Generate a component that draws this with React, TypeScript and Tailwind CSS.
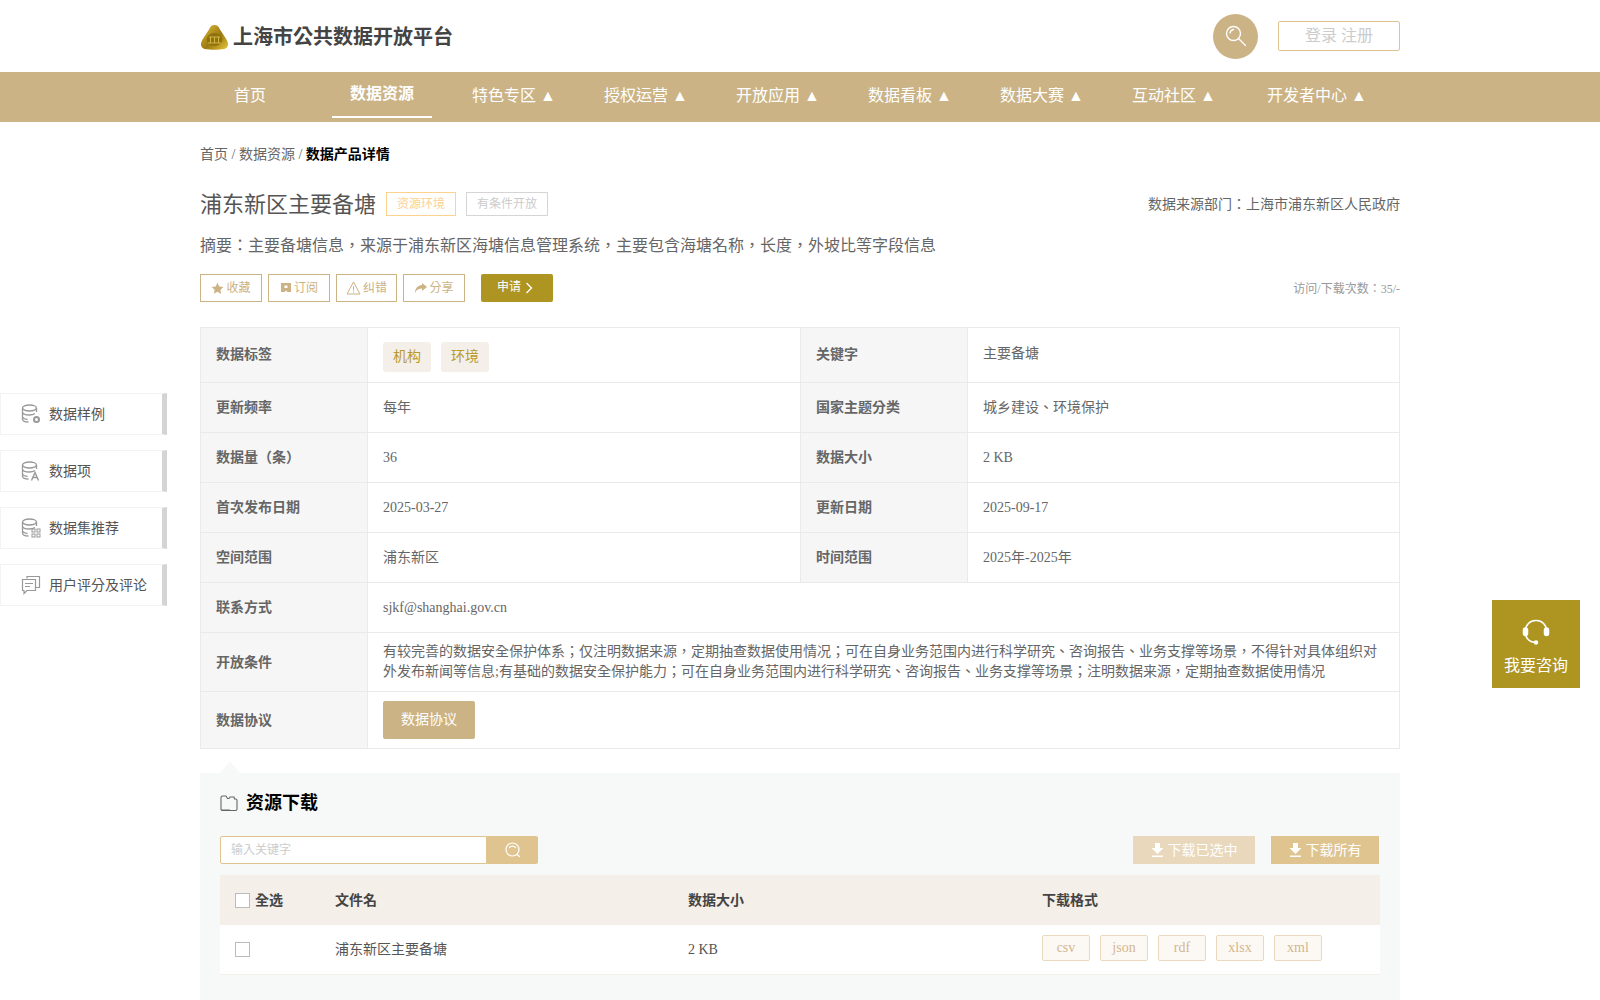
import type { ReactNode } from "react";

const navItems = ["首页", "数据资源", "特色专区 ▲", "授权运营 ▲", "开放应用 ▲", "数据看板 ▲", "数据大赛 ▲", "互动社区 ▲", "开发者中心 ▲"];

function Logo() {
  return (
    <svg width="29" height="26" viewBox="0 0 29 26">
      <defs>
        <linearGradient id="gold" x1="0" y1="0" x2="1" y2="1">
          <stop offset="0" stopColor="#e2bf3a" />
          <stop offset="0.55" stopColor="#9c7a12" />
          <stop offset="1" stopColor="#e6c83a" />
        </linearGradient>
      </defs>
      <path d="M14.500 1c3 0 4.500 2 5.500 4.500l6.500 10c2.500 4.500 2 8-2 9.500-6 1-14 1-20 0-4-1.500-4.500-5-2-9.500L9 5.500C10 3 11.500 1 14.500 1z" fill="url(#gold)" />
      <ellipse cx="14.500" cy="15.500" rx="8" ry="6.500" fill="#8f7110" />
      <path d="M8 19h13M9 13h11M10.500 13v6M14.500 13v6M18.500 13v6" stroke="#d9bd48" strokeWidth="0.9" fill="none" />
    </svg>
  );
}

function SearchGlyph() {
  return (
    <svg width="22" height="22" viewBox="0 0 22 22" fill="none" stroke="#fff" strokeWidth="1.400">
      <circle cx="8.500" cy="8.500" r="7" />
      <path d="M5 8a4 4 0 0 1 3.500-3.500M14 14l6.500 6.500" strokeLinecap="round" />
    </svg>
  );
}

function SmallSearchGlyph() {
  return (
    <svg width="16" height="16" viewBox="0 0 16 16" fill="none" stroke="#fff" strokeWidth="1.200">
      <circle cx="7.500" cy="7.500" r="6.500" />
      <path d="M4.500 5.500a4 4 0 0 1 6 0M12 12.500l2.500 2" strokeLinecap="round" />
    </svg>
  );
}

function DbIcon({ mark }: { mark: ReactNode }) {
  return (
    <svg width="20" height="20" viewBox="0 0 20 20" fill="none" stroke="#999" strokeWidth="1.300">
      <ellipse cx="8.500" cy="4" rx="7" ry="3" />
      <path d="M1.500 4v11c0 2 3 3 6 3M15.500 4v4M1.500 8c0 2 3 3 7 3 2 0 4-.5 5.500-1.500M1.500 12.500c0 1.500 2 2.500 5 3" />
      {mark}
    </svg>
  );
}

const sideItems = [
  {
    label: "数据样例",
    icon: <DbIcon mark={<circle cx="15.500" cy="15.500" r="2.500" strokeWidth="2" />} />,
  },
  {
    label: "数据项",
    icon: <DbIcon mark={<path d="M10.500 19.500l3.500-8 3.500 8M12 16.500h4" strokeWidth="1.400" />} />,
  },
  {
    label: "数据集推荐",
    icon: (
      <DbIcon
        mark={
          <g strokeWidth="1">
            <rect x="11" y="11" width="3" height="3" />
            <rect x="16" y="11" width="3" height="3" />
            <rect x="11" y="16" width="3" height="3" />
            <rect x="16" y="16" width="3" height="3" />
          </g>
        }
      />
    ),
  },
  {
    label: "用户评分及评论",
    icon: (
      <svg width="20" height="20" viewBox="0 0 20 20" fill="none" stroke="#999" strokeWidth="1.200">
        <path d="M6 3.500V1.500h12.500v11H15" />
        <path d="M1.500 4.500h13v11H6l-3 3v-3H1.500z" />
        <path d="M4 8.500h8M4 11.500h5" />
      </svg>
    ),
  },
];

function ActionBtn({ icon, label, width }: { icon: ReactNode; label: string; width: string }) {
  return (
    <button className={`${width} h-[28px] border border-[#cbb385] flex items-center justify-center gap-[2px] text-[12px] text-[#cbb385]`}>
      {icon}
      {label}
    </button>
  );
}

function Label({ children, lift }: { children: ReactNode; lift?: boolean }) {
  return <td className={`bg-[#f6f6f6] border border-[#eaeaea] pl-[15px] text-[14px] font-bold text-[#666] ${lift ? "pb-[2px]" : ""}`}>{children}</td>;
}

function Val({ children, span, lift }: { children: ReactNode; span?: number; lift?: boolean }) {
  return (
    <td colSpan={span} className={`border border-[#eaeaea] px-[15px] text-[14px] text-[#666] leading-[20px] ${lift ? "pb-[3px]" : ""}`}>
      {children}
    </td>
  );
}

function DownloadIcon() {
  return (
    <svg width="13" height="14" viewBox="0 0 13 14" fill="#fff">
      <path d="M4 0h5v5h3.500L6.500 11 .5 5H4z" />
      <path d="M1 12.500h11V14H1z" />
    </svg>
  );
}

export default function App() {
  return (
    <div className="relative h-screen overflow-hidden bg-white font-['Liberation_Serif','Noto_Sans_CJK_TC',serif] text-[#666]">
      {/* Header */}
      <header className="h-[72px] w-[1200px] mx-auto flex items-center justify-between">
        <div className="flex items-center gap-[4px] mt-[1px]">
          <Logo />
          <span className="text-[20px] font-bold text-[#444]">上海市公共数据开放平台</span>
        </div>
        <div className="flex items-center gap-[20px]">
          <div className="w-[45px] h-[45px] rounded-full bg-[#cbb385] flex items-center justify-center">
            <SearchGlyph />
          </div>
          <button className="w-[122px] h-[30px] border border-[#e0c48f] rounded-[2px] text-[16px] text-[#ccc]">登录 注册</button>
        </div>
      </header>

      {/* Nav */}
      <nav className="h-[50px] bg-[#cbb385]">
        <div className="w-[1200px] mx-auto flex text-white text-[16px]">
          <div className="flex -ml-[16px]">
            {navItems.map((item, i) => (
              <div key={item} className={`${i === 8 ? "w-[154px]" : "w-[132px]"} h-[50px] flex justify-center`}>
                {i === 1 ? (
                  <span className="w-[100px] h-[46px] border-b-2 border-white text-center font-bold leading-[44px]">{item}</span>
                ) : (
                  <span className="leading-[47px]">{item}</span>
                )}
              </div>
            ))}
          </div>
        </div>
      </nav>

      <main className="w-[1200px] mx-auto">
        {/* Breadcrumb */}
        <div className="mt-[23px] h-[20px] text-[14px] leading-[20px]">
          首页 / 数据资源 / <span className="font-bold text-black">数据产品详情</span>
        </div>

        {/* Title */}
        <div className="mt-[23px] h-[32px] flex items-center justify-between">
          <div className="flex items-center">
            <h1 className="text-[22px] text-[#555]">浦东新区主要备塘</h1>
            <span className="ml-[10px] w-[70px] h-[24px] border border-[#fdd28e] text-[12px] text-[#fbd18f] flex items-center justify-center">资源环境</span>
            <span className="ml-[10px] w-[82px] h-[24px] border border-[#d5d5d5] text-[12px] text-[#ccc] flex items-center justify-center">有条件开放</span>
          </div>
          <span className="text-[14px]">数据来源部门：上海市浦东新区人民政府</span>
        </div>

        <p className="mt-[14px] h-[24px] text-[16px] leading-[24px]">摘要：主要备塘信息，来源于浦东新区海塘信息管理系统，主要包含海塘名称，长度，外坡比等字段信息</p>

        {/* Actions */}
        <div className="mt-[16px] h-[28px] flex items-center">
          <div className="flex gap-[6px]">
            <ActionBtn
              width="w-[62px]"
              label="收藏"
              icon={
                <svg width="13" height="13" viewBox="0 0 24 24" fill="#cbb385">
                  <path d="M12 1.500l3.300 6.900 7.500 1-5.500 5.200 1.400 7.500L12 18l-6.700 3.600 1.400-7.500L1.200 9.400l7.500-1z" />
                </svg>
              }
            />
            <ActionBtn
              width="w-[62px]"
              label="订阅"
              icon={
                <svg width="12" height="12" viewBox="0 0 12 12" fill="#cbb385">
                  <path d="M1 1h10v9H7.500L6 8.500 4.500 10H1zM4.500 3.500v2.500h3V3.500z" fillRule="evenodd" />
                </svg>
              }
            />
            <ActionBtn
              width="w-[61px]"
              label="纠错"
              icon={
                <svg width="15" height="14" viewBox="0 0 15 14" fill="none" stroke="#cbb385" strokeWidth="1">
                  <path d="M7.500 1L14 13H1zM7.500 5v4.500M7.500 10.500v1" />
                </svg>
              }
            />
            <ActionBtn
              width="w-[62px]"
              label="分享"
              icon={
                <svg width="13" height="12" viewBox="0 0 13 12" fill="#cbb385">
                  <path d="M8 1l5 4-5 4V6.500C5 6.500 2.500 7.500 1 11c0-5 3-7.500 7-8z" />
                </svg>
              }
            />
          </div>
          <button className="ml-[16px] w-[72px] h-[28px] rounded-[2px] bg-[#ae9522] text-white text-[12px] flex items-center justify-center gap-[4px] pr-[4px]">
            <span className="-mt-[2px]">申请</span>
            <svg width="8" height="12" viewBox="0 0 8 12" fill="none" stroke="#fff" strokeWidth="1.300">
              <path d="M1.500 1l5 5-5 5" />
            </svg>
          </button>
          <span className="ml-auto mt-[1px] text-[12px] text-[#999]">访问/下载次数：35/-</span>
        </div>

        {/* Info table */}
        <table className="mt-[25px] w-[1199px] table-fixed border-collapse">
          <colgroup>
            <col className="w-[167px]" />
            <col className="w-[433px]" />
            <col className="w-[167px]" />
            <col className="w-[432px]" />
          </colgroup>
          <tbody>
            <tr className="h-[55px]">
              <Label lift>数据标签</Label>
              <Val>
                <div className="flex gap-[10px] mt-[3px]">
                  <span className="px-[10px] h-[30px] rounded-[3px] bg-[#f4efe8] text-[#b99a28] leading-[30px]">机构</span>
                  <span className="px-[10px] h-[30px] rounded-[3px] bg-[#f4efe8] text-[#b99a28] leading-[30px]">环境</span>
                </div>
              </Val>
              <Label lift>关键字</Label>
              <Val lift>主要备塘</Val>
            </tr>
            <tr className="h-[50px]">
              <Label>更新频率</Label>
              <Val>每年</Val>
              <Label>国家主题分类</Label>
              <Val>城乡建设、环境保护</Val>
            </tr>
            <tr className="h-[50px]">
              <Label>数据量（条）</Label>
              <Val>36</Val>
              <Label>数据大小</Label>
              <Val>2 KB</Val>
            </tr>
            <tr className="h-[50px]">
              <Label>首次发布日期</Label>
              <Val>2025-03-27</Val>
              <Label>更新日期</Label>
              <Val>2025-09-17</Val>
            </tr>
            <tr className="h-[50px]">
              <Label>空间范围</Label>
              <Val>浦东新区</Val>
              <Label>时间范围</Label>
              <Val>2025年-2025年</Val>
            </tr>
            <tr className="h-[50px]">
              <Label>联系方式</Label>
              <Val span={3}>sjkf@shanghai.gov.cn</Val>
            </tr>
            <tr className="h-[59px]">
              <Label>开放条件</Label>
              <Val span={3}>有较完善的数据安全保护体系；仅注明数据来源，定期抽查数据使用情况；可在自身业务范围内进行科学研究、咨询报告、业务支撑等场景，不得针对具体组织对外发布新闻等信息;有基础的数据安全保护能力；可在自身业务范围内进行科学研究、咨询报告、业务支撑等场景；注明数据来源，定期抽查数据使用情况</Val>
            </tr>
            <tr className="h-[57px]">
              <Label>数据协议</Label>
              <Val span={3}>
                <button className="w-[92px] h-[38px] rounded-[2px] bg-[#cbb385] text-white text-[14px]">数据协议</button>
              </Val>
            </tr>
          </tbody>
        </table>

        {/* Resource download */}
        <section className="relative mt-[24px] h-[300px] bg-[#f7f9f8] px-[20px] pt-[16px]">
          <div className="absolute -top-[12px] left-[20px] w-0 h-0 border-x-[10px] border-x-transparent border-b-[12px] border-b-[#f7f9f8]" />
          <div className="flex items-center gap-[8px] h-[28px]">
            <svg width="18" height="16" viewBox="0 0 18 16" fill="none" stroke="#666" strokeWidth="1.100">
              <path d="M1 13.500V2.500A1.500 1.500 0 0 1 2.500 1H6l1.500 2.500h1.500l1-1.500h4l.5 2h1a1.500 1.500 0 0 1 1.500 1.500v8.500a1.500 1.500 0 0 1-1.500 1.500h-13A1.500 1.500 0 0 1 1 13.500zM1 15h9" />
            </svg>
            <h2 className="text-[18px] font-bold text-black">资源下载</h2>
          </div>

          <div className="mt-[19px] flex items-center justify-between h-[28px]">
            <div className="flex">
              <div className="w-[267px] h-[28px] bg-white border border-[#e0c48f] rounded-l-[2px] pl-[10px] text-[12px] text-[#ccc] leading-[26px]">输入关键字</div>
              <button className="w-[51px] h-[28px] bg-[#e0c48f] rounded-r-[2px] flex items-center justify-center">
                <SmallSearchGlyph />
              </button>
            </div>
            <div className="flex gap-[16px] mr-[1px]">
              <button className="w-[122px] h-[28px] bg-[#e9d8bb] text-white text-[14px] flex items-center justify-center gap-[4px]">
                <DownloadIcon />
                下载已选中
              </button>
              <button className="w-[108px] h-[28px] bg-[#e0c48f] text-white text-[14px] flex items-center justify-center gap-[4px]">
                <DownloadIcon />
                下载所有
              </button>
            </div>
          </div>

          <div className="mt-[11px] h-[50px] bg-[#f4efe8] grid grid-cols-[115px_353px_354px_338px] items-center text-[14px] font-bold text-[#444]">
            <div className="pl-[15px] flex items-center gap-[5px]">
              <span className="w-[15px] h-[15px] bg-white border border-[#bbb]" />
              全选
            </div>
            <div>文件名</div>
            <div>数据大小</div>
            <div>下载格式</div>
          </div>
          <div className="h-[50px] bg-white border-b border-[#f4efe8] grid grid-cols-[115px_353px_354px_338px] items-center text-[14px] text-[#555]">
            <div className="pl-[15px]">
              <div className="w-[15px] h-[15px] bg-white border border-[#bbb]" />
            </div>
            <div>浦东新区主要备塘</div>
            <div>2 KB</div>
            <div className="flex gap-[10px] -mt-[3px]">
              {["csv", "json", "rdf", "xlsx", "xml"].map((f) => (
                <span key={f} className="w-[48px] h-[26px] rounded-[2px] bg-[#fcf9f5] border border-[#ead9bd] text-[#d4b68f] text-center leading-[24px]">
                  {f}
                </span>
              ))}
            </div>
          </div>
        </section>
      </main>

      {/* Left floating menu */}
      <aside className="absolute left-0 top-[393px] flex flex-col gap-[15px]">
        {sideItems.map((s) => (
          <div key={s.label} className="w-[167px] h-[42px] bg-white border border-[#f3f3f3] border-r-[5px] border-r-[#d4d4d4] flex items-center pl-[20px] gap-[8px] text-[14px] text-[#555]">
            {s.icon}
            {s.label}
          </div>
        ))}
      </aside>

      {/* Right consult */}
      <div className="absolute left-[1492px] top-[600px] w-[88px] h-[88px] bg-[#ae9522] flex flex-col items-center text-white text-[16px]">
        <svg className="mt-[18px]" width="28" height="28" viewBox="0 0 28 28" fill="none" stroke="#fff" strokeWidth="1.500">
          <path d="M3.500 13A10 10 0 0 1 14 2.500 10 10 0 0 1 24.500 13" />
          <path d="M3.500 15c0 5.500 4 9.500 10.500 9.500" />
          <rect x="1.500" y="10" width="4" height="7.500" rx="2" fill="#fff" />
          <rect x="22.500" y="10" width="4" height="7.500" rx="2" fill="#fff" />
          <circle cx="14" cy="24.500" r="1.500" fill="#fff" />
        </svg>
        <span className="mt-[8px]">我要咨询</span>
      </div>
    </div>
  );
}
